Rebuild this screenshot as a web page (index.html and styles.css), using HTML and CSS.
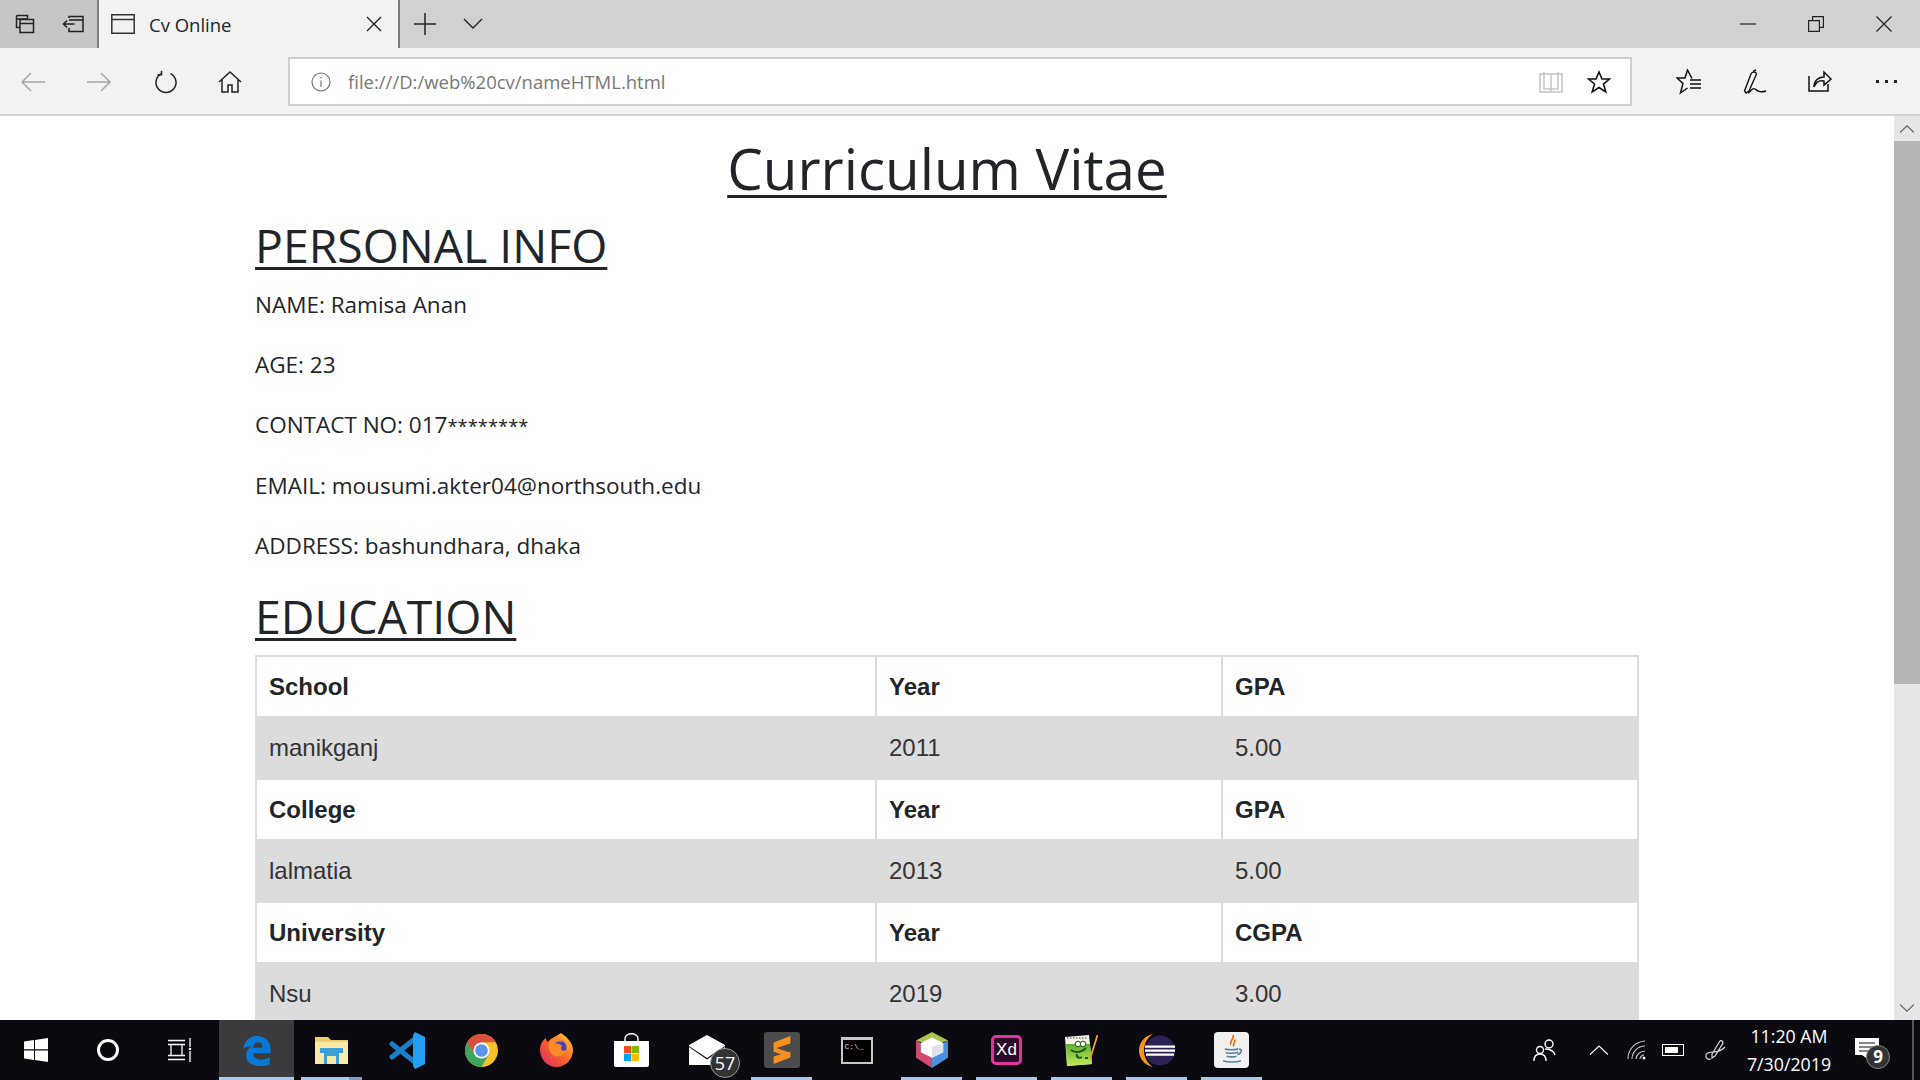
FILE: index.html
```html
<!DOCTYPE html>
<html lang="en">
<head>
    <meta charset="UTF-8">
    <title>Cv Online</title>
    <link rel="stylesheet" href="styles.css">
</head>
<body>
    <!-- Tab strip -->
    <div class="tabbar">
        <div class="tab-tools">
            <div class="tab-tool">
                <svg width="24" height="24" viewBox="0 0 24 24" fill="none" stroke="#222" stroke-width="1.5"><path d="M3.500 3.500h11v3M3.500 3.500v12h3M3.500 7h11"/><path d="M7 7.500h13.500v13H7zM7 11.500h13.500"/></svg>
            </div>
            <div class="tab-tool">
                <svg width="24" height="24" viewBox="0 0 24 24" fill="none" stroke="#222" stroke-width="1.5"><path d="M7 6V4.500h14v15H7V16M7 8h14"/><path d="M1.500 12h11M5 8.500 1.500 12 5 15.500"/></svg>
            </div>
        </div>
        <div class="tab">
            <svg width="24" height="24" viewBox="0 0 24 24" fill="none" stroke="#333" stroke-width="1.5"><path d="M.8 2.800h22.400v18.400H.8zM.8 7.500h22.400"/></svg>
            <span class="tab-title">Cv Online</span>
            <svg class="tab-close" width="16" height="16" viewBox="0 0 16 16" stroke="#222" stroke-width="1.4"><path d="M1 1l14 14M15 1 1 15"/></svg>
        </div>
        <div class="tab-new">
            <svg width="22" height="22" viewBox="0 0 22 22" stroke="#222" stroke-width="1.5"><path d="M11 0v22M0 11h22"/></svg>
        </div>
        <div class="tab-list">
            <svg width="20" height="12" viewBox="0 0 20 12" fill="none" stroke="#222" stroke-width="1.4"><path d="M1 1l9 9 9-9"/></svg>
        </div>
        <div class="window-btns">
            <div class="window-btn"><svg width="16" height="16" viewBox="0 0 16 16" stroke="#222" stroke-width="1.2"><path d="M0 8h16"/></svg></div>
            <div class="window-btn"><svg width="16" height="16" viewBox="0 0 16 16" fill="none" stroke="#222" stroke-width="1.2"><path d="M.6 4.600h10.800v10.800H.6zM4.600 4.400V.6h10.800v10.800h-3.800"/></svg></div>
            <div class="window-btn"><svg width="16" height="16" viewBox="0 0 16 16" stroke="#222" stroke-width="1.2"><path d="M.5.5l15 15M15.500.5l-15 15"/></svg></div>
        </div>
    </div>

    <!-- Address bar -->
    <div class="toolbar">
        <div class="nav-btns">
            <div class="nav-btn"><svg width="26" height="24" viewBox="0 0 26 24" fill="none" stroke="#a8a8a8" stroke-width="1.5"><path d="M25 12H2M11 3l-9 9 9 9"/></svg></div>
            <div class="nav-btn"><svg width="26" height="24" viewBox="0 0 26 24" fill="none" stroke="#a8a8a8" stroke-width="1.5"><path d="M1 12h23M15 3l9 9-9 9"/></svg></div>
            <div class="nav-btn refresh"><svg width="24" height="24" viewBox="0 0 24 24" fill="none" stroke="#222" stroke-width="1.5"><path d="M7.500 3.600a10 10 0 1 0 9 0M7.500 .8v4h-4"/></svg></div>
            <div class="nav-btn"><svg width="24" height="24" viewBox="0 0 24 24" fill="none" stroke="#222" stroke-width="1.5"><path d="M1 12 12 2l11 10M4 10v12h6v-7h4v7h6V10"/></svg></div>
        </div>
        <div class="address">
            <svg class="info-icon" width="20" height="20" viewBox="0 0 20 20" fill="none" stroke="#777" stroke-width="1.2"><circle cx="10" cy="10" r="9"/><path d="M10 8.500V15M10 5v1.600"/></svg>
            <span class="url">file:///D:/web%20cv/nameHTML.html</span>
            <svg class="book-icon" width="24" height="22" viewBox="0 0 24 22" fill="none" stroke="#c4c4c4" stroke-width="1.5"><path d="M1 3h22v18H1zM12 3v18M5 1v17h7M19 1v17h-7"/></svg>
            <svg class="star-icon" width="24" height="24" viewBox="0 0 24 24" fill="none" stroke="#111" stroke-width="1.6"><path d="m12 2 3 7h7.500l-6 5 2.300 8L12 17.500 5.200 22l2.300-8-6-5H9z"/></svg>
        </div>
        <div class="hub-btns">
            <div class="hub-btn"><svg width="26" height="26" viewBox="0 0 26 26" fill="none" stroke="#111" stroke-width="1.5"><path d="M16 9.500 11.500 1 9 9H1l6 5.500L4.500 24l7-5"/><path d="M14 11h11M14 15h11M14 19h11"/></svg></div>
            <div class="hub-btn"><svg width="24" height="26" viewBox="0 0 24 26" fill="none" stroke="#111" stroke-width="1.4"><path d="M3 24 1.500 22 8 5c1-2.500 5-2.500 5.500 0L6 22z"/><path d="M10 2.500 13 1M5 24c3-1 4-6 7-4 3 2 5 4 11 2"/></svg></div>
            <div class="hub-btn share"><svg width="24" height="24" viewBox="0 0 24 24" fill="none" stroke="#111" stroke-width="1.5"><path d="M1 8v15h19v-7"/><path d="M6 19c0-6 4-10 10-10V4l7 7-7 6v-4c-4-1-8 1-10 6z"/></svg></div>
            <div class="hub-btn more">
                <span class="dot"></span><span class="dot"></span><span class="dot"></span>
            </div>
        </div>
    </div>

    <!-- Page with its scrollbar -->
    <div class="viewport">
        <div class="page">
            <div class="container">
                <h1 class="cv-title">Curriculum Vitae</h1>
                <h2 class="cv-heading">PERSONAL INFO</h2>
                <p>NAME: Ramisa Anan</p>
                <p>AGE: 23</p>
                <p>CONTACT NO: 017<span class="stars">********</span></p>
                <p>EMAIL: mousumi.akter04@northsouth.edu</p>
                <p>ADDRESS: bashundhara, dhaka</p>
                <h2 class="cv-heading edu-heading">EDUCATION</h2>
                <table class="edu-table">
                    <tr class="head"><th class="c1">School</th><th class="c2">Year</th><th>GPA</th></tr>
                    <tr class="data"><td>manikganj</td><td>2011</td><td>5.00</td></tr>
                    <tr class="head"><th>College</th><th>Year</th><th>GPA</th></tr>
                    <tr class="data"><td>lalmatia</td><td>2013</td><td>5.00</td></tr>
                    <tr class="head"><th>University</th><th>Year</th><th>CGPA</th></tr>
                    <tr class="data"><td>Nsu</td><td>2019</td><td>3.00</td></tr>
                </table>
            </div>
        </div>
        <div class="scrollbar">
            <div class="scroll-arrow"><svg width="14" height="8" viewBox="0 0 14 8" fill="none" stroke="#666" stroke-width="1.2"><path d="M0 7.500 7 .8l7 6.700"/></svg></div>
            <div class="scroll-thumb"></div>
            <div class="scroll-track"></div>
            <div class="scroll-arrow"><svg width="14" height="8" viewBox="0 0 14 8" fill="none" stroke="#666" stroke-width="1.2"><path d="M0 .5 7 7.200 14 .5"/></svg></div>
        </div>
    </div>

    <!-- Windows taskbar -->
    <div class="taskbar">
        <div class="start-items">
            <div class="start-item"><svg width="24" height="24" viewBox="0 0 24 24" fill="#fff"><path d="M0 3.500 10 2v9.300H0zM11 1.900 24 0v11.300H11zM0 12.500h10v9.400L0 20.500zM11 12.500h13V24l-13-1.900z"/></svg></div>
            <div class="start-item"><svg width="24" height="24" viewBox="0 0 24 24" fill="none" stroke="#fff" stroke-width="3"><circle cx="12" cy="12" r="9.500"/></svg></div>
            <div class="start-item"><svg width="24" height="24" viewBox="0 0 24 24" fill="none" stroke="#fff" stroke-width="1.300"><path d="M0 2.500h17M0 21.500h17M0 6.500h17M0 17.500h17M3 7v10M14 7v10M22 0v9M22 13v11"/><circle cx="22" cy="11" r="1.300" fill="#fff" stroke="none"/></svg></div>
        </div>
        <div class="apps">
            <div class="app active">
                <svg width="30" height="31" viewBox="0 0 32 34"><path fill="#0a78d6" d="M1 15C2 6 9 1 16 1c9 0 15 6 15 15v4H12c0 5 4 7 8 7 3 0 7-1 10-3v8c-3 2-7 2-11 2C9 34 3 28 4 21c.5-4 3-7 7-9-4 .5-8 1.500-10 3zM12 14h10c0-4-2-6-5-6s-5 2-5 6z"/></svg>
            </div>
            <div class="app running split">
                <svg width="33" height="27" viewBox="0 0 33 27"><path fill="#f0cf6a" d="M0 0h13l3 3h17v24H0z"/><path fill="#fbe9a6" d="M0 5h33v22H0z"/><path fill="#3aa0d8" d="M5 11h23v5h-4v11h-3v-8h-9v8H9V16H5z"/></svg>
            </div>
            <div class="app">
                <svg width="36" height="37" viewBox="0 0 36 37" fill="none"><path stroke="#1a80cc" stroke-width="5" stroke-linecap="round" d="M3 12 27 31M3 25 27 6"/><path fill="#1fa0f2" d="M26 0 36 5v27l-10 5-2-3V3z"/></svg>
            </div>
            <div class="app">
                <svg width="33" height="33" viewBox="0 0 33 33"><circle cx="16.500" cy="16.500" r="16.500" fill="#f6c02c"/><path fill="#d8503f" d="M2.200 8.250A16.500 16.500 0 0 1 30.800 8.250H16.500L9 20z"/><path fill="#3ba55c" d="M2.200 8.250A16.500 16.500 0 0 0 16.500 33L24 20H9z"/><circle cx="16.500" cy="16.500" r="8" fill="#fff"/><circle cx="16.500" cy="16.500" r="6.300" fill="#5b94ee"/></svg>
            </div>
            <div class="app">
                <svg width="33" height="34" viewBox="0 0 33 34">
                    <defs>
                        <linearGradient id="fox" x1="1" y1="0" x2="0" y2="1">
                            <stop offset="0" stop-color="#ffd23a"/>
                            <stop offset=".5" stop-color="#f9642a"/>
                            <stop offset="1" stop-color="#d8246a"/>
                        </linearGradient>
                    </defs>
                    <path fill="url(#fox)" d="M21 0c2 2 5 3 7 6 3 3 5 7 5 11 0 9-7 17-16.500 17S0 26 0 17C0 11 3 7 6 5c0 2 1 3 2 4 2-4 8-5 13-9z"/>
                    <circle cx="18" cy="15" r="8.500" fill="#4a3fc0"/>
                    <path fill="#fb8a2a" d="M10 8c4-3 10-3 13 1-3-1-7-1-8 2 3-1 5 0 7 2-3 5 3 6 5 3-1 6-8 9-13 7-5-3-7-10-4-15z"/>
                </svg>
            </div>
            <div class="app">
                <svg width="35" height="34" viewBox="0 0 35 34"><path fill="none" stroke="#fff" stroke-width="1.500" d="M11 9V6c0-7 13-7 13 0v3"/><path fill="#fff" d="M0 8h35v24a2 2 0 0 1-2 2H2a2 2 0 0 1-2-2z"/><path fill="#f25022" d="M10 13h7.200v7.200H10z"/><path fill="#7fba00" d="M17.800 13H25v7.200h-7.200z"/><path fill="#00a4ef" d="M10 20.800h7.200V28H10z"/><path fill="#ffb900" d="M17.800 20.800H25V28h-7.200z"/></svg>
            </div>
            <div class="app">
                <svg width="36" height="30" viewBox="0 0 36 30"><path fill="#fff" d="M0 10 18 0l18 10v20H0z"/><path fill="#0a0a10" d="M0 11l18 12 18-12v1L18 24.500 0 12z"/></svg>
                <span class="mail-badge">57</span>
            </div>
            <div class="app running">
                <div class="sublime">
                    <svg width="20" height="28" viewBox="0 0 20 30"><path fill="#f98f1d" d="M19 0v8L1 14V7zM1 12l18 6v5L1 17zM19 17v6L1 30v-8z"/></svg>
                </div>
            </div>
            <div class="app">
                <div class="cmd"><span class="cmd-prompt">C:\_</span></div>
            </div>
            <div class="app running">
                <svg width="32" height="36" viewBox="0 0 34 46" preserveAspectRatio="none"><path fill="#a6c54a" d="M17 0 34 11 17 18 0 11z"/><path fill="#cf4a6e" d="M0 11v22l17 13V30L5 26V14z"/><path fill="#4a8fdc" d="M34 11v22L17 46V30l12-4V14z"/><path fill="#fff" d="M17 7 29 14v12l-12 7L5 26V14z"/><path fill="#dfe3e8" d="M17 19 29 14v12l-12 7z"/></svg>
            </div>
            <div class="app running">
                <div class="xd"><span>Xd</span></div>
            </div>
            <div class="app running">
                <svg width="33" height="31" viewBox="0 0 33 31">
                    <defs>
                        <linearGradient id="leaf" x1="0" y1="0" x2="0" y2="1">
                            <stop offset="0" stop-color="#5fb030"/>
                            <stop offset="1" stop-color="#c4e858"/>
                        </linearGradient>
                    </defs>
                    <path fill="#f2f2e6" d="M0 2 24 0l3 29-25 2z"/>
                    <path fill="url(#leaf)" d="M1 9h24l2 20-25 2z"/>
                    <path stroke="#444" stroke-dasharray="1.500 1.500" d="M2 3h20"/>
                    <circle cx="13" cy="9" r="2.800" fill="#fff" stroke="#1e5a18"/>
                    <circle cx="18" cy="9" r="2.800" fill="#fff" stroke="#1e5a18"/>
                    <path fill="none" stroke="#1e5a18" stroke-width="2" d="M6 15c4 3 10 3 15-2M12 19c-1 3 2 5 5 3M20 23h3"/>
                    <path stroke="#e8a33a" stroke-width="1.800" d="M32.500 0 25 24"/>
                </svg>
            </div>
            <div class="app running">
                <svg width="36" height="33" viewBox="0 0 36 33"><path fill="#f7941e" d="M14 0C5 2 0 9 0 16.500S5 31 14 33C8 29 5 23 5 16.500S8 4 14 0z"/><circle cx="21" cy="16.500" r="15" fill="#2c2255"/><path fill="#fff" d="M6 11.500h30v2.200H6zM6 15.500h30v2.200H6zM7 19.500h28v2.200H7z"/></svg>
            </div>
            <div class="app running">
                <div class="java">
                    <svg width="24" height="32" viewBox="0 0 24 36" fill="none"><path stroke="#e76f00" stroke-width="1.800" d="M13 1c3 4-5 7-2 11M15 6c2 3-3 5-1 8"/><path stroke="#5382a1" stroke-width="1.800" d="M4 17c5 1 11 1 15-.5M5 21c5 1 10 1 14-.5M20 17c4 0 3 5-2 6M6 25c4 1 8 1 11 0M2 30c5 2 15 2 20 0"/></svg>
                </div>
            </div>
        </div>
        <div class="tray">
            <svg class="tray-people" width="24" height="24" viewBox="0 0 24 24" fill="none" stroke="#fff" stroke-width="1.400"><circle cx="16" cy="6" r="4"/><circle cx="7" cy="12" r="3.500"/><path d="M1 23c0-5 2-7 6-7s6 2 6 7M12 11c3 0 8 0 10 6"/></svg>
            <svg class="tray-chevron" width="18" height="10" viewBox="0 0 18 10" fill="none" stroke="#fff" stroke-width="1.200"><path d="M0 9.500 9 1l9 8.500"/></svg>
            <svg class="tray-wifi" width="20" height="20" viewBox="0 0 20 20" fill="none" stroke="#ccc" stroke-width="1.100"><path d="M1 19C1 9 8 2 18 1M5 19c0-7 6-13 13-13M9 19c0-4 4-8 9-8M13 19c0-2 2-4 4-4"/><circle cx="17" cy="18" r="1.500" fill="#fff" stroke="none"/></svg>
            <div class="tray-battery"><span class="battery-fill"></span></div>
            <svg class="tray-pen" width="22" height="22" viewBox="0 0 22 22" fill="none" stroke="#ddd" stroke-width="1.200"><path d="M7 20c-3 1-6-1-5-4 1-2 4-3 7-3 4 0 8-1 12-5M8 15l8-13c1-1 3 0 3 2l-8 13-3 2z"/></svg>
            <div class="clock">
                <span>11:20 AM</span>
                <span>7/30/2019</span>
            </div>
            <div class="notify">
                <svg width="24" height="24" viewBox="0 0 24 24"><path fill="#fff" d="M0 0h24v17H11l6 7-10-7H0z"/><path stroke="#111" d="M4 5h16M4 9h16M4 13h10"/></svg>
                <span class="notify-badge">9</span>
            </div>
            <div class="show-desktop"></div>
        </div>
    </div>
</body>
</html>
```

FILE: styles.css
```css
* {
    box-sizing: border-box;
}

body {
    margin: 0;
    height: 100vh;
    overflow: hidden;
    display: flex;
    flex-direction: column;
    font-family: "Open Sans", "Noto Sans", sans-serif;
    color: #212529;
    background: white;
}

svg {
    display: block;
}

/* Tab strip */
.tabbar {
    height: 48px;
    flex: none;
    display: flex;
    align-items: stretch;
    background: #d0d1d3;
}

.tab-tools {
    width: 97px;
    display: flex;
    padding-left: 13px;
    gap: 25px;
    align-items: center;
    background: #c6c6c6;
}

.tab {
    width: 303px;
    display: flex;
    align-items: center;
    padding-left: 12px;
    background: #f2f2f2;
    border-left: 2px solid #7b7b7b;
    border-right: 2px solid #7b7b7b;
}

.tab-title {
    margin-left: 14px;
    font-size: 18.5px;
}

.tab-close {
    margin-left: auto;
    margin-right: 16px;
}

.tab-new {
    margin-left: 14px;
    display: flex;
    align-items: center;
}

.tab-list {
    margin-left: 27px;
    display: flex;
    align-items: center;
}

.window-btns {
    margin-left: auto;
    display: flex;
    align-items: center;
    gap: 52px;
    padding-right: 28px;
}

/* Address bar */
.toolbar {
    height: 68px;
    flex: none;
    display: flex;
    align-items: flex-start;
    padding-top: 9px;
    background: #f2f2f2;
    border-bottom: 2px solid #d2d2d2;
}

.nav-btns {
    width: 288px;
    height: 49px;
    display: flex;
    align-items: center;
    padding-left: 20px;
    gap: 40px;
}

.refresh {
    margin-left: 2px;
}

.address {
    width: 1344px;
    height: 49px;
    display: flex;
    align-items: center;
    padding-left: 21px;
    background: white;
    border: 2px solid #d0d0d0;
}

.url {
    margin-left: 17px;
    font-size: 18.5px;
    color: #777;
}

.book-icon {
    margin-left: auto;
}

.star-icon {
    margin-left: 24px;
    margin-right: 19px;
}

.hub-btns {
    height: 49px;
    flex: 1;
    display: flex;
    align-items: center;
    padding-left: 44px;
    gap: 41px;
}

.share {
    margin-top: -4px;
}

.more {
    display: flex;
    gap: 6px;
    margin-left: 3px;
}

.dot {
    width: 3px;
    height: 3px;
    background: #222;
}

/* Page */
.viewport {
    flex: 1;
    min-height: 0;
    display: flex;
}

.page {
    flex: 1;
    overflow: hidden;
}

.container {
    width: 1384px;
    margin: 0 auto;
}

.cv-title {
    margin: 0;
    padding-top: 17px;
    height: 98px;
    line-height: 72px;
    text-align: center;
    font-size: 56.500px;
    font-weight: 400;
    text-decoration: underline;
    text-decoration-thickness: 3px;
    text-underline-offset: 5px;
}

.cv-heading {
    margin: 0;
    height: 73px;
    line-height: 62px;
    font-size: 46.400px;
    font-weight: 400;
    text-decoration: underline;
    text-decoration-thickness: 3px;
    text-underline-offset: 4px;
}

.edu-heading {
    margin-top: -3px;
    height: 70px;
}

.container p {
    margin: 0 0 24px 0;
    font-size: 22.5px;
    line-height: 36px;
}

.stars {
    font-size: 18.400px;
}

.edu-table {
    width: 100%;
    border-collapse: separate;
    border-spacing: 0;
    table-layout: fixed;
    border-top: 2px solid #dcdcdc;
    font-family: "Liberation Sans", Arial, sans-serif;
    font-size: 24px;
}

.edu-table th,
.edu-table td {
    padding: 0 12px;
    text-align: left;
}

.edu-table .c1 {
    width: 622px;
}

.edu-table .c2 {
    width: 346px;
}

.head {
    height: 59px;
}

.head th {
    border-right: 2px solid #dcdcdc;
}

.head th:first-child {
    border-left: 2px solid #dcdcdc;
}

.data {
    height: 64px;
    background: #dcdcdc;
    color: #333;
}

.data td:first-child {
    padding-left: 14px;
}

/* Scrollbar */
.scrollbar {
    width: 26px;
    flex: none;
    display: flex;
    flex-direction: column;
    background: #e6e6e6;
}

.scroll-arrow {
    height: 25px;
    flex: none;
    display: flex;
    align-items: center;
    justify-content: center;
}

.scroll-thumb {
    height: 543px;
    flex: none;
    background: #b6b6b6;
}

.scroll-track {
    flex: 1;
}

/* Taskbar */
.taskbar {
    height: 60px;
    flex: none;
    display: flex;
    background: #0a0a10;
    color: white;
}

.start-items {
    width: 219px;
    display: flex;
}

.start-item {
    width: 72px;
    display: flex;
    align-items: center;
    justify-content: center;
}

.apps {
    display: flex;
}

.app {
    position: relative;
    width: 75px;
    display: flex;
    align-items: center;
    justify-content: center;
}

.app.active {
    background: #3b3b3d;
}

.app.running::after,
.app.active::after {
    content: "";
    position: absolute;
    left: 7px;
    right: 7px;
    bottom: 0;
    height: 3px;
    background: #a8c8ee;
}

.app.active::after {
    left: 0;
    right: 0;
}

.app.split::after {
    right: 7px;
    background: linear-gradient(to right, #a8c8ee 78%, #7f9cc0 78%);
}

.mail-badge {
    position: absolute;
    left: 41px;
    top: 28px;
    width: 30px;
    height: 30px;
    border-radius: 50%;
    background: #333;
    border: 1px solid #999;
    font-size: 18px;
    line-height: 28px;
    text-align: center;
}

.sublime {
    width: 36px;
    height: 36px;
    border-radius: 3px;
    display: flex;
    align-items: center;
    justify-content: center;
    background: #4b4b4b;
}

.cmd {
    width: 32px;
    height: 27px;
    padding: 3px 2px;
    background: black;
    border: 2px solid #c8c8c8;
    border-top-width: 3px;
}

.cmd-prompt {
    display: block;
    font-family: "Liberation Mono", monospace;
    font-size: 8px;
    line-height: 8px;
    color: #ddd;
}

.xd {
    width: 31px;
    height: 30px;
    border: 3px solid #e0359c;
    border-radius: 5px;
    background: #2b0a2a;
    display: flex;
    align-items: center;
    justify-content: center;
    font-family: "Liberation Sans", sans-serif;
    font-size: 17px;
}

.java {
    width: 35px;
    height: 36px;
    border-radius: 4px;
    display: flex;
    align-items: center;
    justify-content: center;
    background: #f0f0f0;
}

.tray {
    flex: 1;
    display: flex;
    align-items: center;
}

.tray-people {
    margin-left: 264px;
}

.tray-chevron {
    margin-left: 33px;
}

.tray-wifi {
    margin-left: 19px;
}

.tray-battery {
    position: relative;
    margin-left: 15px;
    width: 22px;
    height: 12px;
    padding: 2px;
    border: 1px solid white;
}

.battery-fill {
    display: block;
    width: 13px;
    height: 100%;
    background: white;
}

.tray-pen {
    margin-left: 20px;
}

.clock {
    width: 96px;
    margin-left: 15px;
    display: flex;
    flex-direction: column;
    align-items: center;
    gap: 5px;
    font-size: 17.800px;
    line-height: 23px;
}

.notify {
    position: relative;
    margin-left: 18px;
}

.notify-badge {
    position: absolute;
    left: 11px;
    top: 7px;
    width: 24px;
    height: 24px;
    border-radius: 50%;
    background: #333;
    border: 1px solid #888;
    font-size: 17px;
    font-weight: 700;
    line-height: 22px;
    text-align: center;
}

.show-desktop {
    margin-left: auto;
    width: 2px;
    height: 60px;
    margin-right: 6px;
    background: #555;
}
```
